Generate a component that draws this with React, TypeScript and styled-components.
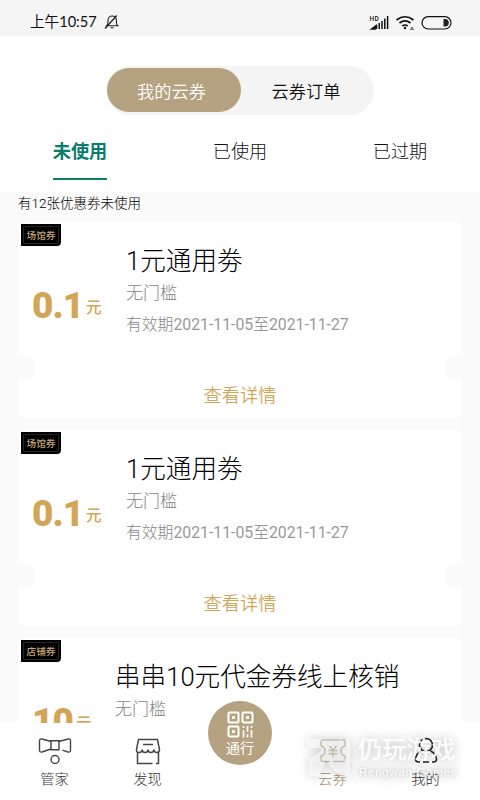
import React from "react";
import styled, { createGlobalStyle } from "styled-components";

const GOLD = "#d3a557";
const SAND = "#b5a281";
const GREEN = "#0a7d6c";

const GlobalStyle = createGlobalStyle`
  * {
    box-sizing: border-box;
  }
  body {
    margin: 0;
    overflow: hidden;
    font-family: Roboto, "Noto Sans CJK SC", sans-serif;
    font-weight: 300;
    color: #222;
  }
`;

const Screen = styled.div`
  display: flex;
  flex-direction: column;
  position: relative;
  width: 480px;
  height: 800px;
  overflow: hidden;
  background: #fafafa;
`;

const StatusBar = styled.header`
  display: flex;
  flex: none;
  align-items: center;
  height: 36px;
  padding: 8px 27px 0 30px;
  background: #f5f5f5;
  .time {
    font-family: Lato, "Noto Sans CJK SC", sans-serif;
    font-size: 14.6px;
    font-weight: 400;
    line-height: 20px;
    color: #111;
  }
  .bell {
    margin-left: 7px;
  }
  .system {
    margin-left: auto;
  }
`;

const Head = styled.div`
  flex: none;
  height: 156px;
  padding-top: 30px;
  background: #fff;
`;

const Segment = styled.div`
  display: flex;
  width: 268px;
  height: 49px;
  margin: 0 auto;
  padding: 2px 0 3px 1px;
  border-radius: 25px;
  background: #f4f4f4;
`;

const SegmentItem = styled.button<{ $active?: boolean }>`
  width: ${({ $active }) => ($active ? 134 : 130)}px;
  height: 44px;
  padding: 0 ${({ $active }) => ($active ? 5 : 0)}px 0 0;
  border: 0;
  border-radius: 22px;
  background: ${({ $active }) => ($active ? SAND : "transparent")};
  color: ${({ $active }) => ($active ? "#fff" : "#111")};
  font: inherit;
  font-size: 17.2px;
  font-weight: 350;
`;

const Tabs = styled.div`
  display: flex;
  margin-top: 14px;
`;

const Tab = styled.div<{ $active?: boolean }>`
  display: flex;
  flex: 1;
  justify-content: center;
  span {
    height: 51px;
    padding: 9px 0 0;
    border-bottom: 2px solid ${({ $active }) => ($active ? GREEN : "transparent")};
    color: ${({ $active }) => ($active ? GREEN : "#111")};
    font-size: 18.2px;
    font-weight: ${({ $active }) => ($active ? 700 : 300)};
    line-height: 27px;
  }
`;

const List = styled.main`
  flex: none;
  height: 531px;
  overflow: hidden;
  padding: 0 18px;
  > .summary {
    height: 30px;
    margin: 0;
    color: #000;
    font-size: 13.5px;
    line-height: 23px;
  }
`;

const Card = styled.article`
  position: relative;
  height: 196px;
  border-radius: 7px;
  background: #fff;
  & + & {
    margin-top: 12px;
  }
  &::before,
  &::after {
    content: "";
    position: absolute;
    top: 133px;
    width: 17px;
    height: 25px;
    background: #fafafa;
  }
  &::before {
    left: 0;
    border-radius: 0 10px 10px 0;
  }
  &::after {
    right: 0;
    border-radius: 10px 0 0 10px;
  }
`;

const Badge = styled.div`
  position: absolute;
  top: 2px;
  left: 3px;
  width: 40px;
  height: 22px;
  padding: 2px;
  border-radius: 0 0 4px 0;
  background: #000;
  span {
    display: block;
    height: 18px;
    border: 1px solid #292621;
    border-radius: 0 0 3px 0;
    color: #c4a672;
    font-size: 9.6px;
    font-weight: 500;
    line-height: 17px;
    text-align: center;
    white-space: nowrap;
  }
`;

const CardBody = styled.div`
  display: flex;
  height: 154px;
`;

const Price = styled.div`
  display: flex;
  flex: none;
  align-items: flex-start;
  padding: 62px 0 0 14px;
  color: ${GOLD};
  font-weight: 700;
  strong {
    font-size: 37px;
    line-height: 44px;
    letter-spacing: -1px;
  }
  small {
    margin-left: 3px;
    padding-top: 13px;
    font-size: 15.6px;
    font-weight: 500;
    line-height: 22px;
  }
`;

const Digits = styled.span`
  font-weight: 400;
  color: #999;
`;

const Info = styled.div<{ $offset: number }>`
  position: absolute;
  top: 20px;
  left: ${({ $offset }) => $offset}px;
  color: #858585;
  h2 {
    margin: 0;
    color: #000;
    font-size: 25.6px;
    font-weight: 300;
    line-height: 38px;
    white-space: nowrap;
  }
  p {
    margin: 0;
    font-size: 17px;
    line-height: 26px;
  }
  p + p {
    margin-top: 7px;
    font-size: 15.8px;
    line-height: 24px;
    white-space: nowrap;
  }
`;

const Detail = styled.div`
  height: 38px;
  color: ${GOLD};
  font-size: 18.2px;
  font-weight: 350;
  line-height: 39px;
  text-align: center;
`;

const BottomBar = styled.nav`
  display: flex;
  position: relative;
  flex: none;
  align-items: flex-start;
  height: 77px;
  padding: 0 8px;
  background: #fff;
`;

const NavItem = styled.div<{ $active?: boolean }>`
  display: flex;
  flex: 1;
  flex-direction: column;
  align-items: center;
  padding-top: 14px;
  color: ${({ $active }) => ($active ? "#a38c63" : "#333")};
  font-size: 14.2px;
  line-height: 20px;
  svg {
    margin-bottom: 4px;
  }
`;

const PassButton = styled.div`
  display: flex;
  flex: none;
  flex-direction: column;
  align-items: center;
  width: 64px;
  height: 64px;
  margin: -22px 14px 0;
  padding-top: 10px;
  border-radius: 50%;
  background: ${SAND};
  color: #fff;
  font-size: 14px;
  font-weight: 400;
  line-height: 20px;
`;

const Watermark = styled.div`
  position: absolute;
  left: 304px;
  top: 737px;
  display: flex;
  color: rgba(255, 255, 255, 0.9);
  filter: drop-shadow(0 0 6px rgba(0, 0, 0, 0.34));
  svg {
    opacity: 0.55;
  }
  .words {
    margin-left: 6px;
    white-space: nowrap;
  }
  .cn {
    font-size: 24.3px;
    font-weight: 500;
    line-height: 26px;
  }
  .en {
    padding-left: 1px;
    font-family: "Liberation Sans", sans-serif;
    font-size: 11.7px;
    font-weight: 400;
    line-height: 18px;
    letter-spacing: 0.6px;
    text-shadow: 0 0 4px rgba(0, 0, 0, 0.3);
  }
`;

const coupons = [
  { tag: "场馆券", price: "0.1", title: "1元通用劵", offset: 108 },
  { tag: "场馆券", price: "0.1", title: "1元通用劵", offset: 108 },
  { tag: "店铺券", price: "10", title: "串串10元代金券线上核销", offset: 97 },
];

const BellOff = () => (
  <svg className="bell" width="16" height="16" viewBox="0 0 16 16" fill="none" stroke="#222" strokeWidth="1.1">
    <path d="M2.5 11.8h11.4c-1-1-1.5-1.800-1.500-3V6.200a4.200 4.200 0 0 0-8.400 0v2.600c0 1.200-.5 2-1.500 3ZM6.500 13.800h3" />
    <path d="M1 14.500 12.800 1.500" strokeWidth="1.300" />
  </svg>
);

const SystemIcons = () => (
  <svg className="system" width="84" height="18" viewBox="369 12 84 18" fill="none" stroke="#111">
    <text x="369.500" y="19.500" fontSize="6.500" fontWeight="500" letterSpacing=".5" fill="#111" stroke="none">
      HD
    </text>
    <path d="M371.500 28l3.500-2.500V28ZM376.500 28v-4.500M379.200 28v-6M382 28v-8M384.800 28V17.500M387.600 28V15" strokeWidth="1.500" />
    <path d="M396.500 19q8.500-6.500 17 0M399.500 22q5.500-4.200 11 0M402.300 25q2.700-2 5.400 0" strokeWidth="1.700" />
    <circle cx="405" cy="27" r="1.200" fill="#111" stroke="none" />
    <path d="M410.500 28.500h1.500l1-2h-1.500ZM412.500 28.500h1.500" strokeWidth=".6" />
    <rect x="422" y="15.700" width="29" height="12.300" rx="6.150" strokeWidth="1.200" />
    <path d="M443.500 18h1.500a3.800 3.800 0 0 1 0 7.600h-1.500Z" fill="#222" stroke="none" />
  </svg>
);

const BowIcon = () => (
  <svg width="34" height="28" viewBox="0 0 34 28" fill="none" stroke="#444" strokeWidth="1.400">
    <path d="M13 4.500 4 2Q1.500 1.500 1.500 4v9q0 2.500 2.500 2l9-3M21 4.500 30 2q2.500-.5 2.500 2v9q0 2.500-2.500 2l-5.500-1.800M13 3.800h8v9h-8Z" />
    <circle cx="17" cy="22.500" r="4" />
  </svg>
);

const ShopIcon = () => (
  <svg width="26" height="28" viewBox="0 0 26 28" fill="none" stroke="#444" strokeWidth="1.500">
    <path d="M3.500 2.500h19l2 10q0 3-2.700 3t-3-3q0 3-2.900 3t-2.900-3q0 3-2.900 3t-2.900-3q0 3-3 3t-2.700-3ZM8 7.500h10M2.500 15v11.500h15M23.500 15v11.500H21" />
  </svg>
);

const QrIcon = () => (
  <svg width="27" height="27" viewBox="0 0 27 27" fill="none" stroke="#fff" strokeWidth="2">
    <rect x="1.500" y="1.500" width="10" height="10" rx="1" />
    <rect x="15.500" y="1.500" width="10" height="10" rx="1" />
    <rect x="1.500" y="15.500" width="10" height="10" rx="1" />
    <path d="M5 6.500h3M19 6.500h3M5 20.500h3" strokeWidth="3" />
    <path d="M16.500 15v2M16.500 19v7.500M20.500 15v6M20.500 23v3.500M24.500 15v2M24.500 19v7.500" strokeWidth="1.700" />
  </svg>
);

const TicketIcon = () => (
  <svg width="28" height="28" viewBox="0 0 28 28" fill="none" stroke="#927b53" strokeWidth="1.400">
    <path d="M11 24.500H4q-2 0-2-2V19q4-1 4-5T2 9V5q0-2 2-2h17M22 3h4v6q-4 1-4 5t4 5v3.500M26 24.500H14" />
    <path d="m10.500 9 3.500 4 3.500-4M9.500 13.500h9M9.500 16.800h9M14 13v7.500" />
  </svg>
);

const UserIcon = () => (
  <svg width="24" height="28" viewBox="0 0 24 28" fill="none" stroke="#222" strokeWidth="1.500">
    <circle cx="12" cy="8" r="6.500" />
    <path d="M7.500 14Q2 16.500 1.500 22q0 3 3 3H6M9 25h6M18 25h1.500q3 0 3-3-.5-5.500-6-8" />
  </svg>
);

const WatermarkLogo = () => (
  <svg width="48" height="42" viewBox="0 0 48 42" fill="#fff">
    <path d="M1 2h41q4 0 4 4v29q0 4-4 4h-4q-3 0-5-2L22 24l-7 15h-7q-3 0-3-3V22l12-8v-3H9Q5 11 1 2Z" />
  </svg>
);

const App = () => {
  return (
    <Screen>
      <GlobalStyle />
      <StatusBar>
        <span className="time">上午10:57</span>
        <BellOff />
        <SystemIcons />
      </StatusBar>
      <Head>
        <Segment>
          <SegmentItem $active>我的云券</SegmentItem>
          <SegmentItem>云券订单</SegmentItem>
        </Segment>
        <Tabs>
          <Tab $active>
            <span>未使用</span>
          </Tab>
          <Tab>
            <span>已使用</span>
          </Tab>
          <Tab>
            <span>已过期</span>
          </Tab>
        </Tabs>
      </Head>
      <List>
        <p className="summary">有12张优惠券未使用</p>
        {coupons.map((item, index) => (
          <Card key={index}>
            <Badge>
              <span>{item.tag}</span>
            </Badge>
            <CardBody>
              <Price>
                <strong>{item.price}</strong>
                <small>元</small>
              </Price>
              <Info $offset={item.offset}>
                <h2>{item.title}</h2>
                <p>无门槛</p>
                <p>
                  有效期<Digits>2021-11-05</Digits>至<Digits>2021-11-27</Digits>
                </p>
              </Info>
            </CardBody>
            <Detail>查看详情</Detail>
          </Card>
        ))}
      </List>
      <BottomBar>
        <NavItem>
          <BowIcon />
          管家
        </NavItem>
        <NavItem>
          <ShopIcon />
          发现
        </NavItem>
        <PassButton>
          <QrIcon />
          通行
        </PassButton>
        <NavItem $active>
          <TicketIcon />
          云券
        </NavItem>
        <NavItem>
          <UserIcon />
          我的
        </NavItem>
      </BottomBar>
      <Watermark>
        <WatermarkLogo />
        <div className="words">
          <div className="cn">仍玩游戏</div>
          <div className="en">Rengwan Games</div>
        </div>
      </Watermark>
    </Screen>
  );
};

export default App;
